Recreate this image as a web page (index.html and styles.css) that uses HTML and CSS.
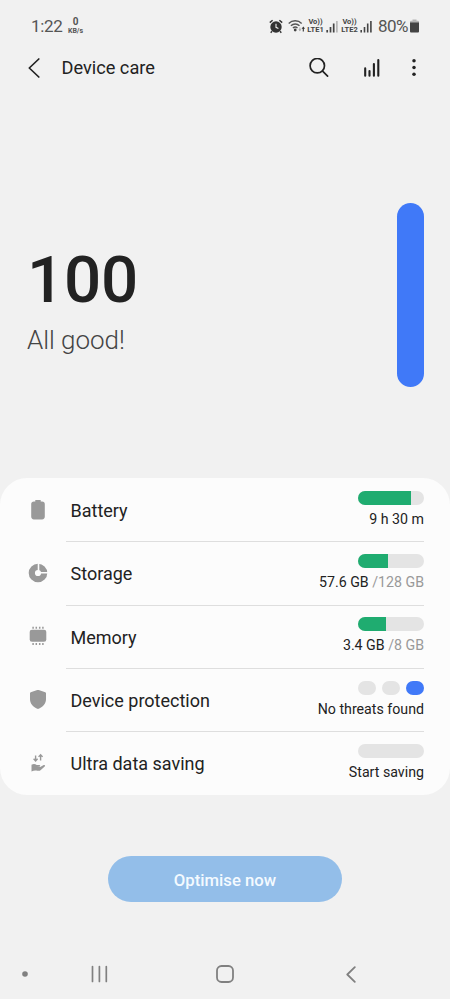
FILE: index.html
```html
<!DOCTYPE html>
<html lang="en">
<head>
<meta charset="utf-8">
<title>Device care</title>
<link rel="stylesheet" href="styles.css">
</head>
<body>
<div class="screen">
  <div class="status">
    <span class="clock">1:22</span>
    <span class="speed"><b>0</b><small>KB/s</small></span>
    <svg class="alarm" width="14" height="15" viewBox="0 0 14 15">
      <path d="M.8 3.6 3.6 1.2M13.2 3.6 10.4 1.2M3 12.3 1.7 13.7M11 12.3l1.3 1.4" stroke="#333" stroke-width="1.5" fill="none"/>
      <circle cx="7" cy="8" r="5.7" fill="#333"/>
      <path d="M7 4.700V8.300L9.400 9.600" stroke="#f1f1f1" stroke-width="1.100" fill="none"/>
    </svg>
    <svg class="wifi" width="18" height="14" viewBox="0 0 18 14">
      <g fill="none" stroke="#555" stroke-width="1.400"><path d="M.7 4.400a9.300 9.300 0 0 1 13 0M2.900 6.800a6.200 6.200 0 0 1 8.600 0M4.900 9a3.400 3.400 0 0 1 4.600 0"/></g>
      <circle cx="7.200" cy="11" r="1.400" fill="#444"/>
      <path d="M11.900 8.500v3" stroke="#aaa" stroke-width="1"/><path d="m10.400 10.200 1.500 2 1.500-2z" fill="#aaa"/>
      <path d="M15.300 9v3.400" stroke="#333" stroke-width="1.100"/><path d="m13.600 9.800 1.700-2.200 1.700 2.200z" fill="#333"/>
    </svg>
    <span class="lte"><span>Vo))</span><span>LTE1</span></span>
    <svg class="bars" width="12" height="13" viewBox="0 0 12 13"><path d="M1.200 10v2.500M4.500 7v5.500M7.700 3.600v8.900" stroke="#444" stroke-width="1.700"/><path d="M10.900 1v11.500" stroke="#aaa" stroke-width="1.400"/></svg>
    <span class="lte two"><span>Vo))</span><span>LTE2</span></span>
    <svg class="bars" width="12" height="13" viewBox="0 0 12 13"><path d="M1.200 10v2.500M4.500 7v5.500M7.700 3.600v8.900M10.900 1v11.500" stroke="#444" stroke-width="1.600"/></svg>
    <span class="percent">80%</span>
    <svg class="cell" width="9" height="14" viewBox="0 0 9 14"><path d="M2.500.5h4v1.300H8q1 0 1 1V5H0V2.800q0-1 1-1h1.500z" fill="#b5b5b5"/><path d="M0 3.500h9V12.500q0 1-1 1H1q-1 0-1-1z" fill="#444"/></svg>
  </div>

  <header class="bar">
    <svg class="back" width="12" height="20" viewBox="0 0 12 20"><path d="M10.800 1 1.300 10l9.500 9" fill="none" stroke="#222" stroke-width="1.700" stroke-linecap="round" stroke-linejoin="round"/></svg>
    <h1>Device care</h1>
    <svg class="search" width="20" height="20" viewBox="0 0 20 20"><g fill="none" stroke="#222" stroke-width="1.700" stroke-linecap="round"><circle cx="8.300" cy="7.700" r="7.200"/><path d="m13.600 13.100 5 5"/></g></svg>
    <svg class="chart" width="16" height="19" viewBox="0 0 16 19"><path d="M1.200 9.400V16.700M5.500 12v4.700M9.900 5.100v11.600M14.300 1.100v15.600" fill="none" stroke="#222" stroke-width="2.100" stroke-linecap="round"/></svg>
    <svg class="more" width="4" height="18" viewBox="0 0 4 18"><g fill="#222"><circle cx="2" cy="1.800" r="1.750"/><circle cx="2" cy="8.500" r="1.750"/><circle cx="2" cy="15.300" r="1.750"/></g></svg>
  </header>

  <section class="hero">
    <div>
      <div class="score">100</div>
      <div class="verdict">All good!</div>
    </div>
    <div class="gauge"></div>
  </section>

  <main class="card">
    <div class="row">
      <svg class="icon" width="24" height="24" viewBox="0 0 24 24"><path d="M9.300 2h5.400v1.500H16q2.800 0 2.800 2.800V18.600q0 2.800-2.800 2.800H8q-2.800 0-2.800-2.800V6.300q0-2.800 2.800-2.800h1.300z"/></svg>
      <div class="body"><span class="name">Battery</span>
        <div class="info"><div class="meter"><i style="width:80%"></i></div><div class="value">9 h 30 m</div></div></div>
    </div>
    <div class="row">
      <svg class="icon" width="24" height="24" viewBox="0 0 24 24"><circle cx="12" cy="12" r="6.200" fill="none" stroke="#999" stroke-width="6.200"/><path d="M12.500 11.500V2M12.500 11.800H22" stroke="#fcfcfc" stroke-width="1.600"/></svg>
      <div class="body"><span class="name">Storage</span>
        <div class="info"><div class="meter"><i style="width:46%"></i></div><div class="value">57.6 GB <em>/128 GB</em></div></div></div>
    </div>
    <div class="row">
      <svg class="icon" width="24" height="24" viewBox="0 0 24 24"><rect x="3.700" y="5.800" width="16.600" height="12" rx="2.300"/><path d="M7.100 2.700v2M10.300 2.700v2M13.700 2.700v2M16.900 2.700v2M7.100 19v2M10.300 19v2M13.700 19v2M16.900 19v2" stroke="#999" stroke-width="1.500"/></svg>
      <div class="body"><span class="name">Memory</span>
        <div class="info"><div class="meter"><i style="width:43%"></i></div><div class="value">3.4 GB <em>/8 GB</em></div></div></div>
    </div>
    <div class="row">
      <svg class="icon" width="24" height="24" viewBox="0 0 24 24"><path d="M11.300 2.100q.7-.3 1.400 0l6.600 2.200q.7.300.7 1V11.200c0 4.300-3 7.600-8 9.900-5-2.300-8-5.600-8-9.900V5.300q0-.7.700-1z"/></svg>
      <div class="body"><span class="name">Device protection</span>
        <div class="info"><div class="pills"><i></i><i></i><i class="on"></i></div><div class="value">No threats found</div></div></div>
    </div>
    <div class="row">
      <svg class="icon" width="24" height="24" viewBox="0 0 24 24"><path d="M9.600 4.500V9.500M7.600 7.700l2 2.200 2-2.200M14.600 9.500V4.200M12.600 5.900l2-2.200 2 2.200" fill="none" stroke="#999" stroke-width="1.400"/><path d="M5.500 13.800c2.200-1.200 3.700-.8 5.200.3h2.600c1.200 0 1.300 1.500.2 1.700l-2.500.3h3.200l3.500-2c1.100-.6 1.900.6 1 1.400l-3.900 3.500c-1 .9-2 .9-3.500.7-2-.4-3.700-.3-5.800.9z"/></svg>
      <div class="body"><span class="name">Ultra data saving</span>
        <div class="info"><div class="meter"></div><div class="value">Start saving</div></div></div>
    </div>
  </main>

  <div class="action"><button>Optimise now</button></div>

  <nav class="nav">
    <svg width="6" height="6" viewBox="0 0 6 6"><circle cx="3" cy="3" r="2.800" fill="#808080"/></svg>
    <svg class="recents" width="17" height="18" viewBox="0 0 17 18"><path d="M1.500 1.500v15M8.400 1.500v15M15.300 1.500v15" stroke="#808080" stroke-width="1.700" stroke-linecap="round"/></svg>
    <svg class="home" width="18" height="18" viewBox="0 0 18 18"><rect x="1" y="1" width="16" height="16" rx="4.500" fill="none" stroke="#808080" stroke-width="1.800"/></svg>
    <svg class="return" width="10" height="17" viewBox="0 0 10 17"><path d="M8.800 1.200 1.300 8.500l7.500 7.300" fill="none" stroke="#808080" stroke-width="1.800" stroke-linecap="round" stroke-linejoin="round"/></svg>
  </nav>
</div>
</body>
</html>
```
FILE: styles.css
```css
* { box-sizing: border-box; }
body { margin: 0; font-family: Roboto, sans-serif; background: #f1f1f1; color: #222; }
svg { display: block; flex: none; }
.screen { width: 450px; height: 999px; display: flex; flex-direction: column; overflow: hidden; }

.status { height: 52px; flex: none; display: flex; align-items: center; padding: 0 31px 0; color: #555; white-space: nowrap; }
.clock { font-size: 17px; width: 36px; letter-spacing: -.3px; }
.speed { width: 17px; display: flex; flex-direction: column; align-items: center; line-height: 1; margin-top: -1px; }
.speed b { font-size: 10px; line-height: 10px; font-weight: 700; }
.speed small { font-size: 7px; line-height: 8px; font-weight: 700; }
.alarm { margin-left: auto; }
.wifi { margin-left: 4.500px; }
.lte { display: flex; flex-direction: column; align-items: center; width: 18px; margin-left: 1px; font-size: 7.500px; font-weight: 700; line-height: 8px; color: #444; }
.lte.two { margin-left: 3px; }
.bars { margin-left: 1px; }
.percent { font-size: 17px; width: 29px; margin-left: 6.500px; letter-spacing: -.6px; }
.cell { margin-left: 3px; }

.bar { height: 32px; flex: none; display: flex; align-items: center; padding: 0 34px 0 28px; }
.bar h1 { margin: 0 auto 0 21.500px; font-size: 18.200px; font-weight: 400; line-height: 22px; }
.chart { margin-left: 35px; }
.more { margin-left: 32px; }

.hero { height: 394px; flex: none; display: flex; justify-content: space-between; padding: 119px 26px 92px 27px; }
.score { font-size: 65.500px; font-weight: 500; line-height: 78px; margin-top: 38px; letter-spacing: -.2px; }
.verdict { font-size: 26px; font-weight: 300; line-height: 32px; margin-top: 5px; color: #444; letter-spacing: -.05px; }
.gauge { width: 27px; height: 184px; border-radius: 14px; background: #4079f8; }

.card { height: 317px; flex: none; display: grid; grid-template-rows: repeat(4, 63.330px) 1fr; background: #fcfcfc; border-radius: 27px; padding: 1px 26px 0 25px; }
.row { display: flex; align-items: center; }
.icon { fill: #999; margin: 0 16.500px 2px .5px; }
.body { flex: 1; height: 100%; display: flex; align-items: center; justify-content: space-between; padding-left: 4.500px; border-bottom: 1px solid #dedede; }
.row:last-child .body { border-bottom-color: transparent; }
.name { font-size: 18px; line-height: 24px; padding-top: 2px; }
.info { display: flex; flex-direction: column; align-items: flex-end; padding-bottom: 2px; }
.meter { width: 66px; height: 14px; border-radius: 7px; background: #e4e4e4; overflow: hidden; }
.meter i { display: block; height: 100%; background: #1fac70; }
.pills { width: 66px; display: flex; justify-content: space-between; }
.pills i { width: 18px; height: 14px; border-radius: 7px; background: #e4e4e4; }
.pills .on { background: #4079f8; }
.value { font-size: 14.200px; line-height: 18px; margin-top: 5px; white-space: nowrap; }
.value em { font-style: normal; color: #999; }

.action { height: 154px; flex: none; display: flex; justify-content: center; padding-top: 61px; }
.action button { width: 234px; height: 46px; border: 0; border-radius: 23px; background: #93bee9; color: #f4faff; font: 500 16.700px/20px Roboto, sans-serif; padding: 4px 0 0; }

.nav { height: 50px; flex: none; display: flex; align-items: center; padding-left: 22px; }
.recents { margin-left: 63px; }
.home { margin-left: 108px; }
.return { margin-left: 112px; }
```
